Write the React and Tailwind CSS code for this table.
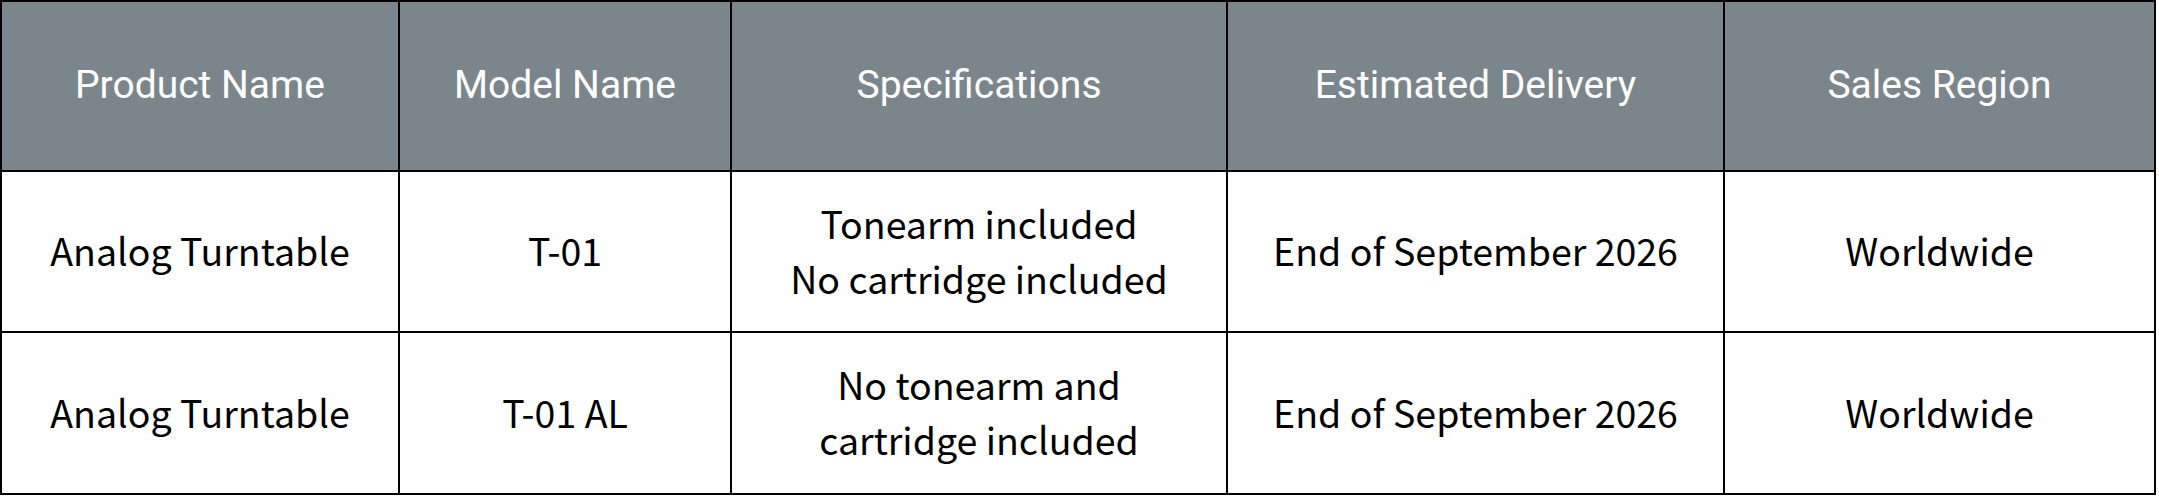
const headers = ["Product Name", "Model Name", "Specifications", "Estimated Delivery", "Sales Region"]

const rows = [
  ["Analog Turntable", "T-01", ["Tonearm included", "No cartridge included"], "End of September 2026", "Worldwide"],
  ["Analog Turntable", "T-01 AL", ["No tonearm and", "cartridge included"], "End of September 2026", "Worldwide"],
]

const Cell = ({ children }) => (
  <div className="bg-white flex flex-col items-center justify-center pb-[4px] text-center text-black text-[37.5px] leading-[55px] font-normal font-['Noto_Sans_CJK_JP',sans-serif]">
    {children}
  </div>
)

export default function App() {
  return (
    <div className="bg-white w-[2159px] h-[498px]">
      <div className="grid grid-cols-[396px_330px_494px_495px_429px] grid-rows-[168px_159px_160px] gap-[2px] p-[2px] bg-black w-[2156px]">
        {headers.map(h => (
          <div key={h} className="bg-[#7b868c] flex items-center justify-center pb-[2px] text-white text-[39px] font-['Roboto',sans-serif] font-normal">
            {h}
          </div>
        ))}
        {rows.map((r, i) =>
          r.map((c, j) => (
            <Cell key={i + "-" + j}>
              {Array.isArray(c) ? c.map(l => <span key={l}>{l}</span>) : c}
            </Cell>
          ))
        )}
      </div>
    </div>
  )
}
